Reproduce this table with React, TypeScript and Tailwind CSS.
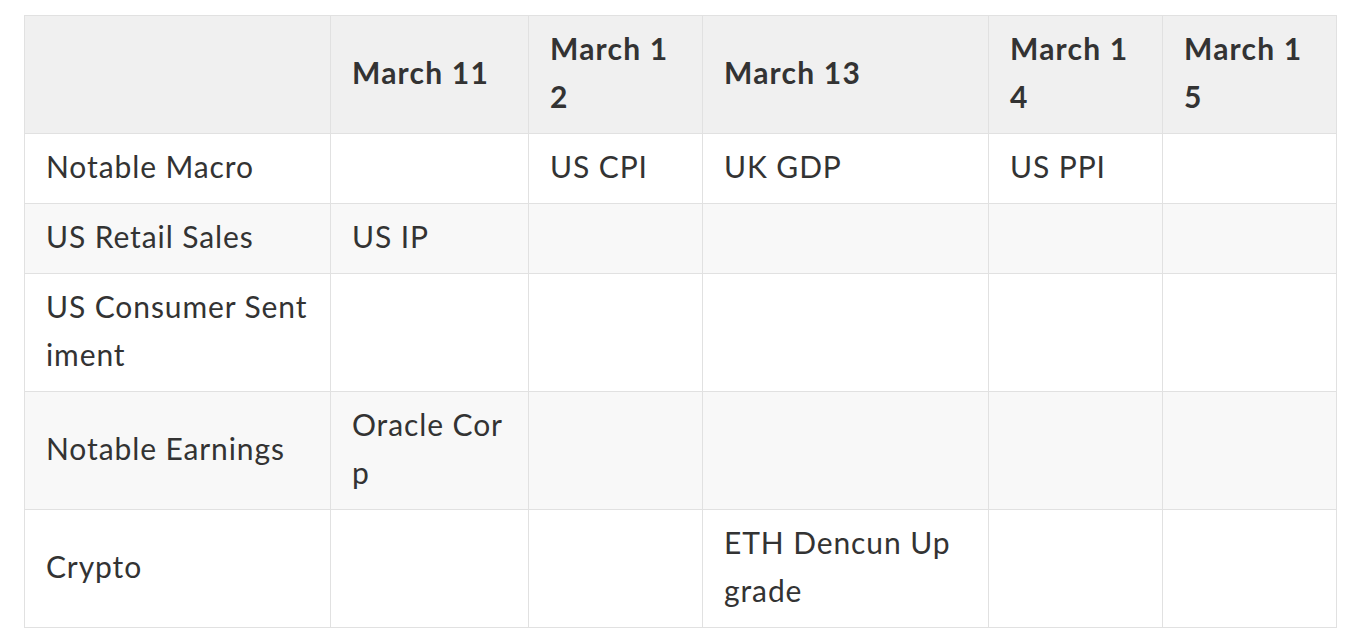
const columns = ['', 'March 11', 'March 12', 'March 13', 'March 14', 'March 15'];

const rows: string[][] = [
  ['Notable Macro', '', 'US CPI', 'UK GDP', 'US PPI', ''],
  ['US Retail Sales', 'US IP', '', '', '', ''],
  ['US Consumer Sentiment', '', '', '', '', ''],
  ['Notable Earnings', 'Oracle Corp', '', '', '', ''],
  ['Crypto', '', '', 'ETH Dencun Upgrade', '', ''],
];

const widths = ['w-[306px]', 'w-[198px]', 'w-[174px]', 'w-[286px]', 'w-[174px]', 'w-[174px]'];

export default function App() {
  return (
    <div className="min-h-screen bg-white pt-[15px] pl-[24px] font-['Lato',sans-serif] text-[#333]">
      <table className="table-fixed border-collapse text-[30px] leading-[48px]">
        <colgroup>
          {widths.map((w, i) => <col key={i} className={w} />)}
        </colgroup>
        <thead>
          <tr className="bg-[#f0f0f0]">
            {columns.map((c, i) => (
              <th key={i} className="border border-[#e1e1e1] pl-[21px] pr-[21px] pt-[8px] pb-[13px] h-[117px] text-left font-bold tracking-[1.2px] break-all align-middle">
                {c}
              </th>
            ))}
          </tr>
        </thead>
        <tbody>
          {rows.map((r, ri) => (
            <tr key={ri} className={ri % 2 === 1 ? 'bg-[#f8f8f8]' : 'bg-white'}>
              {r.map((cell, ci) => (
                <td
                  key={ci}
                  className={`border border-[#e1e1e1] pl-[21px] pt-[8px] pb-[13px] tracking-[0.9px] break-all align-middle ${ci === 3 ? 'pr-[28px]' : 'pr-[21px]'}`}
                >
                  {cell}
                </td>
              ))}
            </tr>
          ))}
        </tbody>
      </table>
    </div>
  );
}
